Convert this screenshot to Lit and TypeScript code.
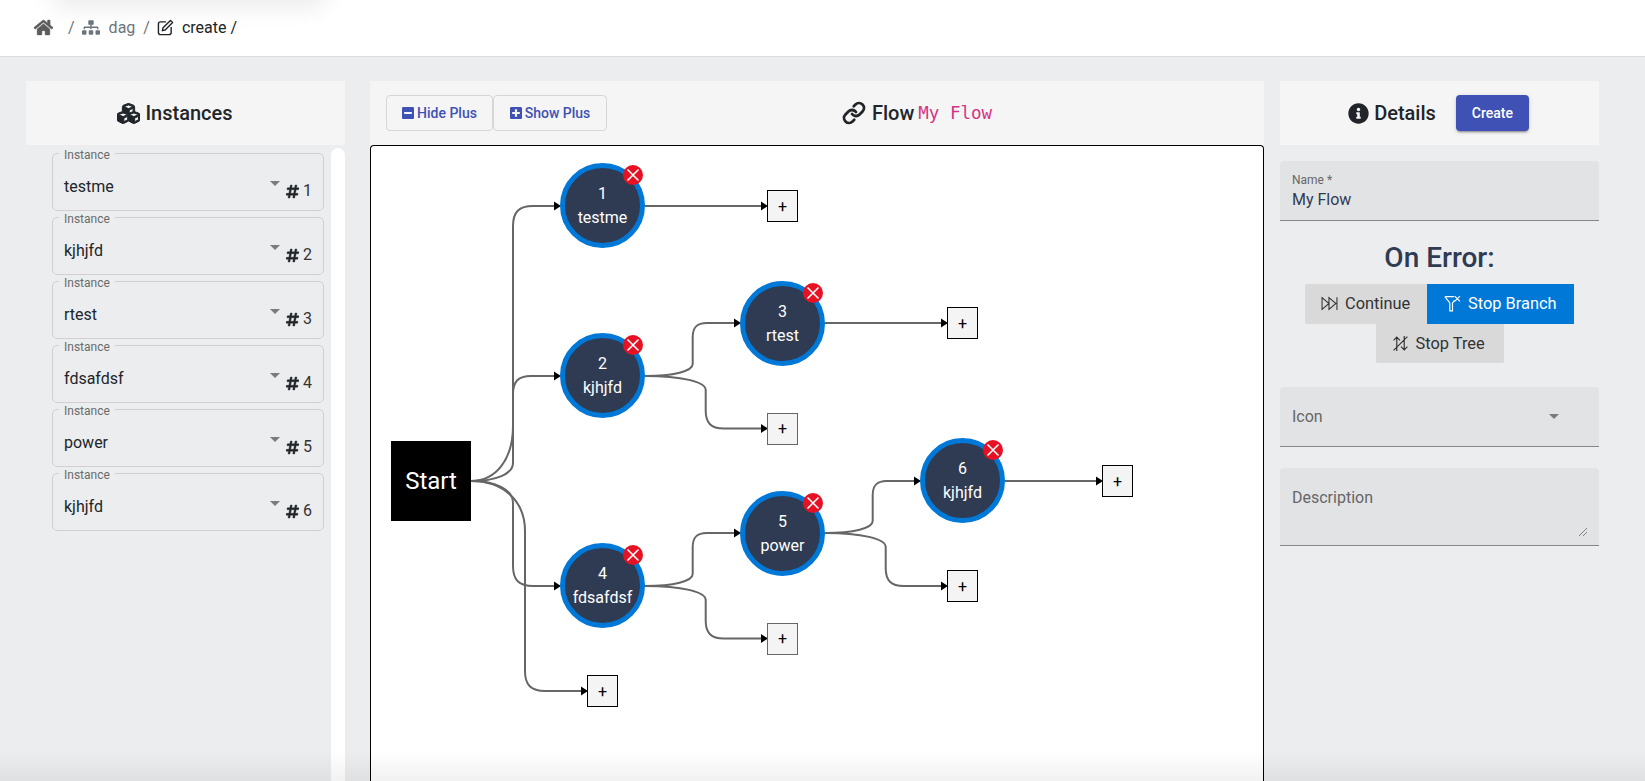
import { LitElement, html, css, svg } from "lit";
import { customElement } from "lit/decorators.js";

const P = {
  home: "M280.37 148.26L96 300.11V464a16 16 0 0 0 16 16l112.06-.29a16 16 0 0 0 15.92-16V368a16 16 0 0 1 16-16h64a16 16 0 0 1 16 16v95.64a16 16 0 0 0 16 16.05L464 480a16 16 0 0 0 16-16V300L295.67 148.26a12.19 12.19 0 0 0-15.3 0zM571.6 251.47L488 182.56V44.05a12 12 0 0 0-12-12h-56a12 12 0 0 0-12 12v72.61L318.47 43a48 48 0 0 0-61 0L4.34 251.47a12 12 0 0 0-1.6 16.9l25.5 31A12 12 0 0 0 45.15 301l235.22-193.74a12.19 12.19 0 0 1 15.3 0L530.9 301a12 12 0 0 0 16.9-1.6l25.5-31a12 12 0 0 0-1.7-16.93z",
  sitemap: "M128 352H32c-17.67 0-32 14.33-32 32v96c0 17.67 14.33 32 32 32h96c17.67 0 32-14.33 32-32v-96c0-17.67-14.33-32-32-32zm-24-80h192v48h48v-48h192v48h48v-57.59c0-21.17-17.23-38.41-38.41-38.41H344v-64h40c17.67 0 32-14.33 32-32V32c0-17.67-14.33-32-32-32H256c-17.67 0-32 14.33-32 32v96c0 17.67 14.33 32 32 32h40v64H94.41C73.23 224 56 241.23 56 262.41V320h48v-48zm264 80h-96c-17.67 0-32 14.33-32 32v96c0 17.67 14.33 32 32 32h96c17.67 0 32-14.33 32-32v-96c0-17.67-14.33-32-32-32zm240 0h-96c-17.67 0-32 14.33-32 32v96c0 17.67 14.33 32 32 32h96c17.67 0 32-14.33 32-32v-96c0-17.67-14.33-32-32-32z",
  cubes: "M488.6 250.2L392 214V105.5c0-15-9.3-28.4-23.4-33.7l-100-37.5c-8.1-3.1-17.1-3.1-25.3 0l-100 37.5c-14.1 5.3-23.4 18.7-23.4 33.7V214l-96.6 36.2C9.3 255.5 0 268.9 0 283.9V394c0 13.6 7.7 26.1 19.9 32.2l100 50c10.1 5.1 22.1 5.1 32.2 0l103.9-52 103.9 52c10.1 5.1 22.1 5.1 32.2 0l100-50c12.2-6.1 19.9-18.6 19.9-32.2V283.9c0-15-9.3-28.4-23.4-33.7zM358 214.8l-85 31.9v-68.2l85-37v73.3zM154 104.1l102-38.2 102 38.2v.6l-102 41.4-102-41.4v-.6zm84 291.1l-85 42.5v-79.1l85-38.8v75.4zm0-112l-102 41.4-102-41.4v-.6l102-38.2 102 38.2v.6zm240 112l-85 42.5v-79.1l85-38.8v75.4zm0-112l-102 41.4-102-41.4v-.6l102-38.2 102 38.2v.6z",
  info: "M256 8C119.043 8 8 119.083 8 256c0 136.997 111.043 248 248 248s248-111.003 248-248C504 119.083 392.957 8 256 8zm0 110c23.196 0 42 18.804 42 42s-18.804 42-42 42-42-18.804-42-42 18.804-42 42-42zm56 254c0 6.627-5.373 12-12 12h-88c-6.627 0-12-5.373-12-12v-24c0-6.627 5.373-12 12-12h12v-64h-12c-6.627 0-12-5.373-12-12v-24c0-6.627 5.373-12 12-12h64c6.627 0 12 5.373 12 12v100h12c6.627 0 12 5.373 12 12v24z",
  hash: "M440.667 182.109l7.143-40c1.313-7.355-4.342-14.109-11.813-14.109h-74.81l14.623-81.891C377.123 38.754 371.468 32 363.997 32h-40.632a12 12 0 0 0-11.813 9.891L296.175 128H197.54l14.623-81.891C213.477 38.754 207.822 32 200.35 32h-40.632a12 12 0 0 0-11.813 9.891L132.528 128H53.432a12 12 0 0 0-11.813 9.891l-7.143 40C33.163 185.246 38.818 192 46.289 192h74.81L98.242 320H19.146a12 12 0 0 0-11.813 9.891l-7.143 40C-1.123 377.246 4.532 384 12.003 384h74.81L72.19 465.891C70.877 473.246 76.532 480 84.003 480h40.632a12 12 0 0 0 11.813-9.891L151.825 384h98.634l-14.623 81.891C234.523 473.246 240.178 480 247.65 480h40.632a12 12 0 0 0 11.813-9.891L315.472 384h79.096a12 12 0 0 0 11.813-9.891l7.143-40c1.313-7.355-4.342-14.109-11.813-14.109h-74.81l22.857-128h79.096a12 12 0 0 0 11.813-9.891zM261.889 320h-98.634l22.857-128h98.634l-22.857 128z",
  minus: "M400 32H48C21.5 32 0 53.5 0 80v352c0 26.5 21.5 48 48 48h352c26.5 0 48-21.5 48-48V80c0-26.5-21.5-48-48-48zM92 296c-6.6 0-12-5.4-12-12v-56c0-6.6 5.4-12 12-12h264c6.6 0 12 5.4 12 12v56c0 6.6-5.4 12-12 12H92z",
  plus: "M400 32H48C21.5 32 0 53.5 0 80v352c0 26.5 21.5 48 48 48h352c26.5 0 48-21.5 48-48V80c0-26.5-21.5-48-48-48zm-32 252c0 6.6-5.4 12-12 12h-92v92c0 6.6-5.4 12-12 12h-56c-6.6 0-12-5.4-12-12v-92H92c-6.6 0-12-5.4-12-12v-56c0-6.6 5.4-12 12-12h92v-92c0-6.6 5.4-12 12-12h56c6.6 0 12 5.4 12 12v92h92c6.6 0 12 5.4 12 12v56z",
};

const fa = (d: string, vb: string, cls: string) =>
  html`<svg class=${cls} viewBox=${vb} fill="currentColor"><path d=${d}></path></svg>`;

const INSTANCES = ["testme", "kjhjfd", "rtest", "fdsafdsf", "power", "kjhjfd"];
const NODES = [
  { n: 1, name: "testme", cx: 602.5, cy: 205.5 },
  { n: 2, name: "kjhjfd", cx: 602.5, cy: 375.5 },
  { n: 3, name: "rtest", cx: 782.5, cy: 323.5 },
  { n: 4, name: "fdsafdsf", cx: 602.5, cy: 585.5 },
  { n: 5, name: "power", cx: 782.5, cy: 533.5 },
  { n: 6, name: "kjhjfd", cx: 962.5, cy: 480.5 },
];
const PLUS = [
  { x: 767, y: 190, soft: false },
  { x: 947, y: 307, soft: false },
  { x: 767, y: 412.5, soft: true },
  { x: 1102, y: 465, soft: false },
  { x: 947, y: 570, soft: false },
  { x: 767, y: 622.5, soft: true },
  { x: 587, y: 675, soft: false },
];

function elbow(x1: number, y1: number, xm: number, x2: number, y2: number, r1: number, r2: number) {
  const s = Math.sign(y2 - y1);
  const k = 0.7;
  return `M${x1} ${y1} C${x1 + (xm - x1) * 0.6} ${y1} ${xm} ${y1 + s * r1 * 0.4} ${xm} ${y1 + s * r1} L${xm} ${y2 - s * r2} C${xm} ${y2 - s * r2 * (1 - k)} ${xm + r2 * (1 - k)} ${y2} ${xm + r2} ${y2} L${x2} ${y2}`;
}
const EDGES = [
  elbow(471, 481, 513, 557, 206, 55, 20),
  elbow(471, 481, 513, 557, 376, 18, 18),
  elbow(471, 481, 513, 557, 586, 22, 20),
  elbow(471, 481, 525, 584, 691, 50, 20),
  "M645 206 L764 206",
  elbow(645, 376, 692.7, 737, 323, 12, 14),
  elbow(645, 376, 705.7, 764, 428.5, 14, 18),
  "M825 323 L944 323",
  elbow(645, 586, 692.7, 737, 533, 12, 14),
  elbow(645, 586, 705.7, 764, 638.5, 14, 18),
  elbow(825, 533, 872.7, 917, 481, 12, 14),
  elbow(825, 533, 885.7, 944, 586, 14, 18),
  "M1005 481 L1099 481",
];
const ARROWS = [
  [561, 206], [561, 376], [561, 586], [741, 323], [741, 533], [921, 481],
  [768, 206], [948, 323], [768, 428.5], [1103, 481], [948, 586], [768, 638.5], [588, 691],
];
const CANVAS_X = 371;
const CANVAS_Y = 146;

@customElement("app-root")
export class AppRoot extends LitElement {
  static styles = css`
    :host {
      display: block;
      position: relative;
      height: 100vh;
      overflow: hidden;
      background: #ecedef;
      font-family: Roboto, "Liberation Sans", sans-serif;
      font-size: 16px;
      color: #212529;
    }
    * { box-sizing: border-box; }
    .topblob {
      position: absolute; left: 58px; top: -24px; width: 262px; height: 24px;
      box-shadow: 0 0 24px 8px rgba(0, 0, 0, 0.08); background: #fff; border-radius: 8px;
    }
    .topbar {
      height: 57px; background: #fff; border-bottom: 1px solid #d8dbe0;
      display: flex; align-items: center; padding: 0 0 2px 34px;
    }
    .crumb-home { width: 19px; height: 17px; color: #5c5c5c; stroke: currentColor; stroke-width: 14; }
    .crumb-sep { margin: 0 7px 0 15px; color: #6c757d; }
    .crumb-sep2 { margin: 0 7px 0 8px; color: #6c757d; }
    .crumb-map { width: 18px; height: 15px; color: #6c757d; margin-right: 9px; }
    .crumb-muted { color: #6c757d; }
    .crumb-edit { width: 17px; height: 17px; margin: 0 8px 0 0; color: #212529; }
    .crumb-cur { color: #212529; }

    .main { display: flex; padding: 24px 0 0 26px; height: calc(100vh - 57px); }
    .col { display: flex; flex-direction: column; min-height: 0; flex: none; width: 319px; }
    .col.mid { width: 894px; margin: 0 16px 0 25px; }
    .head {
      height: 64px; background: #f5f5f5; display: flex; align-items: center; flex: none;
      font-size: 20px; font-weight: 500;
    }
    .head-left { justify-content: center; gap: 5px; padding-right: 21px; }
    .h-icon { width: 21px; height: 21px; color: #212529; }
    .cubes { width: 23px; height: 23px; stroke: currentColor; stroke-width: 22; }

    .left-body { flex: 1; display: flex; min-height: 0; padding-top: 3px; }
    .list {
      flex: 1; padding: 5px 7px 0 26px; display: flex; flex-direction: column; gap: 6px;
    }
    .inst {
      position: relative; height: 58px; border: 1px solid #cfd0d2; border-radius: 5px;
      display: flex; align-items: flex-start; padding: 21px 11px 0 11px; flex: none;
    }
    .inst-label {
      position: absolute; left: 6px; top: -6px; padding: 0 5px; background: #ecedef;
      font-size: 12px; line-height: 14px; color: #6b6b6b;
    }
    .inst-value { line-height: 24px; color: #212529; }
    .caret {
      width: 0; height: 0; border-left: 5px solid transparent; border-right: 5px solid transparent;
      border-top: 5px solid #7a7a7a;
    }
    .inst .caret { margin: 6px 6px 0 auto; }
    .hash { width: 13px; height: 15px; margin-top: 9px; color: #212529; stroke: currentColor; stroke-width: 14; }
    .inst-num { margin: 7px 0 0 4px; font-size: 16px; line-height: 18px; color: #333; width: 9px; }
    .scroll { width: 14px; flex: none; background: #fff; border-radius: 7px 7px 0 0; }

    .head-mid { padding-left: 16px; }
    .btns { display: flex; }
    .ghost {
      height: 36px; display: flex; align-items: center; justify-content: center; gap: 3px;
      border: 1px solid #d6d6d6; border-radius: 4px; background: transparent;
      color: #3f51b5; font: 500 14px Roboto, sans-serif; padding: 0;
    }
    .g1 { width: 107px; }
    .g2 { width: 114px; }
    .ghost svg { width: 12px; height: 14px; }
    .title { display: flex; align-items: center; margin-left: 235px; gap: 6px; }
    .title code {
      font: 400 17.5px "DejaVu Sans Mono", monospace; color: #d63384; margin-left: -2px;
    }
    .link-i { width: 24px; height: 24px; }

    .canvas {
      position: relative; flex: 1; background: #fff; border: 1px solid #000; border-bottom: 0;
      border-radius: 4px 4px 0 0; overflow: hidden;
    }
    .edges { position: absolute; left: 0; top: 0; width: 100%; height: 100%; }
    .start {
      position: absolute; width: 80px; height: 80px; background: #000; color: #fff;
      display: flex; align-items: center; justify-content: center; font-size: 24px;
    }
    .node {
      position: absolute; width: 85px; height: 85px; border-radius: 50%; background: #2f3b52;
      border: 5px solid #0078d7; color: #fff; display: flex; flex-direction: column;
      align-items: center; justify-content: center; line-height: 20px; gap: 4px; font-size: 16px;
    }
    .badge {
      position: absolute; left: 58px; top: -3px; width: 20px; height: 20px; border-radius: 50%;
      background: #e81123;
    }
    .badge svg { display: block; width: 20px; height: 20px; }
    .plus {
      position: absolute; width: 31px; height: 32px; background: #f4f4f4; border: 1px solid #000;
      display: flex; align-items: center; justify-content: center; font-size: 16px; color: #000;
    }
    .plus.soft { border-color: #666; }

    .head-right { justify-content: center; gap: 20px; padding-right: 2px; }
    .d-title { display: flex; align-items: center; gap: 5px; }
    .create {
      width: 73px; height: 36px; border: 0; border-radius: 4px; background: #3f51b5; color: #fff;
      font: 500 14px Roboto, sans-serif;
      box-shadow: 0 3px 1px -2px rgba(0,0,0,.2), 0 2px 2px 0 rgba(0,0,0,.14), 0 1px 5px 0 rgba(0,0,0,.12);
    }
    .fill {
      background: #e2e3e5; border-bottom: 1px solid #85878a; border-radius: 4px 4px 0 0;
      padding: 0 12px; position: relative;
    }
    .f-name { height: 60px; margin-top: 16px; padding-top: 10px; }
    .f-label { font-size: 12px; line-height: 18px; color: #666; }
    .f-value { line-height: 20px; color: #2f3b52; padding-top: 1px; }
    .err {
      text-align: center; font-size: 28px; font-weight: 500; line-height: 34px; color: #2f3b52;
      margin: 20px 0 9px;
    }
    .toggle { display: flex; flex-wrap: wrap; justify-content: center; }
    .tbtn {
      height: 39.5px; display: flex; align-items: center; background: #d9d9d9; color: #333;
      padding: 0 16px; gap: 7px; border: 0; font: 400 16.4px Roboto, sans-serif;
    }
    .tbtn svg { width: 17px; height: 17px; flex: none; }
    .tbtn.on { background: #0078d7; color: #fff; }
    .tbtn.a { border-radius: 2px 0 0 2px; width: 122px; }
    .tbtn.b { width: 147px; padding-left: 17px; }
    .tbtn.c { width: 128px; border-radius: 0 0 2px 2px; }
    .f-icon {
      height: 60px; margin-top: 24px; display: flex; align-items: center; justify-content: space-between;
      color: #666; padding-right: 40px;
    }
    .f-desc { height: 78px; margin-top: 21px; padding-top: 19px; color: #666; line-height: 22px; }
    .grip { position: absolute; right: 12px; bottom: 9px; width: 8px; height: 8px; }
    .shade {
      position: absolute; left: 0; right: 0; bottom: 0; height: 30px; pointer-events: none;
      background: linear-gradient(to bottom, rgba(0,0,0,0), rgba(0,0,0,0.055));
    }
  `;

  render() {
    return html`
      <div class="topblob"></div>
      <div class="topbar">
        ${fa(P.home, "0 0 576 512", "crumb-home")}
        <span class="crumb-sep">/</span>
        ${fa(P.sitemap, "0 0 640 512", "crumb-map")}
        <span class="crumb-muted">dag</span>
        <span class="crumb-sep2">/</span>
        <svg class="crumb-edit" viewBox="0 0 24 24" fill="none" stroke="currentColor" stroke-width="2" stroke-linecap="round" stroke-linejoin="round">
          <path d="M12 4H5a3 3 0 0 0-3 3v12a3 3 0 0 0 3 3h12a3 3 0 0 0 3-3v-7"></path>
          <path d="M19 2l3 3-10.5 10.500-4 1 1-4z"></path>
        </svg>
        <span class="crumb-cur">create /</span>
      </div>
      <div class="main">
        <section class="col">
          <div class="head head-left">${fa(P.cubes, "0 0 512 512", "h-icon cubes")}<span>Instances</span></div>
          <div class="left-body">
            <div class="list">
              ${INSTANCES.map((v, i) => html`
                <div class="inst">
                  <span class="inst-label">Instance</span>
                  <span class="inst-value">${v}</span>
                  <span class="caret"></span>
                  ${fa(P.hash, "0 0 448 512", "hash")}
                  <span class="inst-num">${i + 1}</span>
                </div>`)}
            </div>
            <div class="scroll"></div>
          </div>
        </section>

        <section class="col mid">
          <div class="head head-mid">
            <div class="btns">
              <button class="ghost g1">${fa(P.minus, "0 0 448 512", "")}Hide Plus</button>
              <button class="ghost g2">${fa(P.plus, "0 0 448 512", "")}Show Plus</button>
            </div>
            <div class="title">
              <svg class="link-i" viewBox="0 0 24 24" fill="none" stroke="currentColor" stroke-width="2.8" stroke-linecap="round" stroke-linejoin="round">
                <path d="M10 13a5 5 0 0 0 7.540.540l3-3a5 5 0 0 0-7.070-7.070l-1.720 1.710"></path>
                <path d="M14 11a5 5 0 0 0-7.540-.540l-3 3a5 5 0 0 0 7.070 7.070l1.710-1.710"></path>
              </svg>
              <span>Flow</span><code>My Flow</code>
            </div>
          </div>
          <div class="canvas">
            <svg class="edges">
              <g transform="translate(${-CANVAS_X},${-CANVAS_Y})">
                ${EDGES.map((d) => svg`<path d=${d} fill="none" stroke="#666" stroke-width="2"></path>`)}
                ${ARROWS.map(([x, y]) => svg`<path d="M${x} ${y}L${x - 7} ${y - 4.5}V${y + 4.5}Z" fill="#000"></path>`)}
              </g>
            </svg>
            <div class="start" style="left:${391 - CANVAS_X}px;top:${441 - CANVAS_Y}px">Start</div>
            ${PLUS.map((p) => html`
              <div class="plus ${p.soft ? "soft" : ""}" style="left:${p.x - CANVAS_X}px;top:${p.y - CANVAS_Y}px">+</div>`)}
            ${NODES.map((n) => html`
              <div class="node" style="left:${n.cx - 42.5 - CANVAS_X}px;top:${n.cy - 42.5 - CANVAS_Y}px">
                <span>${n.n}</span><span>${n.name}</span>
                <span class="badge">
                  <svg viewBox="0 0 20 20" fill="none" stroke="#fff" stroke-width="1.6"><path d="M4.500 4.500l11 11M15.500 4.500l-11 11"></path></svg>
                </span>
              </div>`)}
          </div>
        </section>

        <section class="col">
          <div class="head head-right">
            <div class="d-title">${fa(P.info, "0 0 512 512", "h-icon")}<span>Details</span></div>
            <button class="create">Create</button>
          </div>
          <div class="fill f-name">
            <div class="f-label">Name *</div>
            <div class="f-value">My Flow</div>
          </div>
          <div class="err">On Error:</div>
          <div class="toggle">
            <button class="tbtn a">
              <svg viewBox="0 0 16 16" fill="none" stroke="currentColor" stroke-width="1"><path d="M1 2.500v11L7.500 8zM7.500 2.500v11L14 8zM15 2v12"></path></svg>
              Continue
            </button>
            <button class="tbtn b on">
              <svg viewBox="0 0 16 16" fill="none" stroke="currentColor" stroke-width="1.1"><path d="M.8 1.500h8.500M.8 1.500L5.500 7.500V15h2.500V7.500l2-2.500M10 1l5 5M15 1l-5 5"></path></svg>
              Stop Branch
            </button>
            <button class="tbtn c">
              <svg viewBox="0 0 16 16" fill="none" stroke="currentColor" stroke-width="1.1"><path d="M4.500 15V2M1.500 5l3-3 3 3M11.500 1v13M8.500 11l3 3 3-3M14.500 1.500L1.500 14.500"></path></svg>
              Stop Tree
            </button>
          </div>
          <div class="fill f-icon"><span>Icon</span><span class="caret"></span></div>
          <div class="fill f-desc">
            Description
            <svg class="grip" viewBox="0 0 8 8" fill="none" stroke="#555" stroke-width=".7"><path d="M0 8L8 0M4 8L8 4"></path></svg>
          </div>
        </section>
      </div>
      <div class="shade"></div>
    `;
  }
}
